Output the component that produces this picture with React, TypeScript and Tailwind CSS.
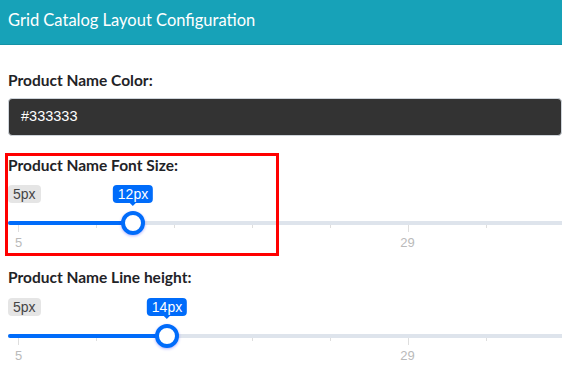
type SliderProps = {
  minLabel: string;
  valueLabel: string;
  handleX: number;
};

const ticks = [true, false, false, false, false, true, false, false];

function RangeSlider({ minLabel, valueLabel, handleX }: SliderProps) {
  return (
    <div className="font-['Liberation_Sans',Arial,sans-serif]">
      <div className="relative flex h-[18px]">
        <span className="rounded-[4px] bg-black/10 px-[5px] py-[2px] text-[14px] leading-[14px] text-[#444]">
          {minLabel}
        </span>
        <span
          className="absolute top-0 -translate-x-1/2 rounded-[4px] bg-[#006cfa] px-[5px] py-[2px] text-[14px] leading-[14px] text-white"
          style={{ left: handleX }}
        >
          {valueLabel}
          <span className="absolute left-1/2 top-full -ml-[3px] h-0 w-0 border-x-[3px] border-t-[3px] border-x-transparent border-t-[#006cfa]" />
        </span>
      </div>

      <div className="relative mt-[18px] h-1 w-[600px] rounded-full bg-[#dee4ec]">
        <div className="h-1 rounded-full bg-[#006cfa]" style={{ width: handleX }} />
        <div
          className="absolute top-1/2 h-6 w-6 -translate-x-1/2 -translate-y-1/2 rounded-full border-4 border-[#006cfa] bg-white shadow-[0_1px_3px_rgba(0,0,255,0.3)]"
          style={{ left: handleX }}
        />
      </div>

      <div className="flex w-[600px] items-start gap-[77px] pl-[10px]">
        {ticks.map((major, i) => (
          <div key={i} className={`w-px shrink-0 bg-[#dedede] ${major ? "h-[7px]" : "h-[3px]"}`} />
        ))}
      </div>

      <div className="mt-[4px] flex text-[13px] leading-[14px] text-[#bababa]">
        <span className="w-[21px] text-center">5</span>
        <span className="ml-[368px] w-[21px] text-center">29</span>
      </div>
    </div>
  );
}

export default function App() {
  return (
    <div className="relative h-[380px] w-[562px] overflow-hidden bg-white font-['Lato',sans-serif]">
      <div className="flex h-[45px] items-center border-b border-[#1592a6] bg-[#17a2b8] px-2 pb-[3px] text-[16.5px] text-white">
        Grid Catalog Layout Configuration
      </div>

      <div className="px-2">
        <label className="mt-[25px] block text-[15.5px] font-bold leading-5 text-[#1f2327]">
          Product Name Color:
        </label>
        <div className="mt-2 flex h-[38px] w-[554px] items-center rounded-[4px] border border-[#ced4da] bg-[#333333] px-3 font-['Liberation_Sans',Arial,sans-serif] text-[14.5px] text-white">
          #333333
        </div>

        <label className="mt-[19px] block text-[15.5px] font-bold leading-5 text-[#1f2327]">
          Product Name Font Size:
        </label>
        <div className="mt-[10px] h-[70px]">
          <RangeSlider minLabel="5px" valueLabel="12px" handleX={125} />
        </div>

        <label className="mt-3 block text-[15.5px] font-bold leading-5 text-[#1f2327]">
          Product Name Line height:
        </label>
        <div className="mt-[11px]">
          <RangeSlider minLabel="5px" valueLabel="14px" handleX={159} />
        </div>
      </div>

      <div className="pointer-events-none absolute left-[5px] top-[153px] h-[103px] w-[274px] border-[3px] border-[#ff0000]" />
    </div>
  );
}
